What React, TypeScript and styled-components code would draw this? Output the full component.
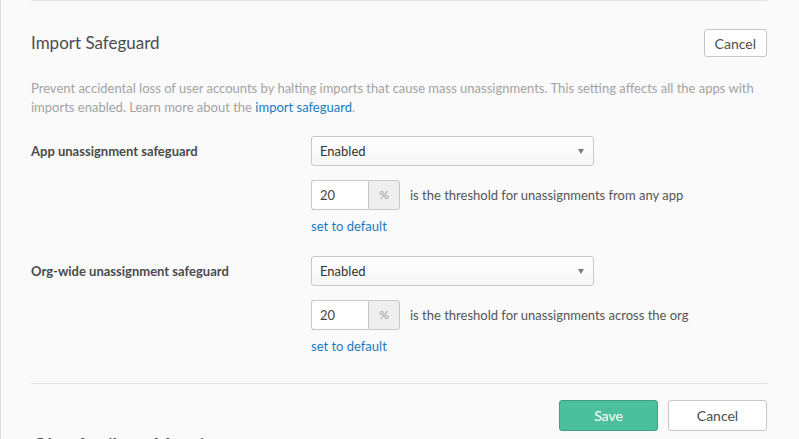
import React from 'react';
import styled, { createGlobalStyle } from 'styled-components';

const GlobalStyle = createGlobalStyle`
  html, body {
    margin: 0;
    padding: 0;
    background: #fafafa;
  }
  body {
    font-family: Lato, "Liberation Sans", Arial, sans-serif;
    color: #4a4a4a;
  }
`;

const Page = styled.div`
  border-left: 1px solid #dcdcdc;
  min-height: 439px;
  padding: 0 32px 0 30px;
  overflow: hidden;
`;

const Section = styled.section`
  border-top: 1px solid #e3e3e3;
  padding-top: 28px;
`;

const HeaderRow = styled.div`
  display: flex;
  align-items: center;
  justify-content: space-between;
  height: 28px;
`;

const Title = styled.h2`
  margin: 0;
  font-size: 17px;
  font-weight: 400;
  color: #4d4d4d;
  line-height: 28px;
`;

const Button = styled.button<{ $primary?: boolean; $wide?: boolean }>`
  box-sizing: border-box;
  font-family: inherit;
  font-size: 14px;
  height: ${p => (p.$wide ? '31px' : '28px')};
  width: ${p => (p.$wide ? '99px' : 'auto')};
  padding: 0 10px;
  border-radius: 3px;
  border: 1px solid ${p => (p.$primary ? '#3e9e80' : '#c6c6c6')};
  background: ${p => (p.$primary ? '#4cbf9c' : '#ffffff')};
  color: ${p => (p.$primary ? '#ffffff' : '#4d4d4d')};
  cursor: pointer;
`;

const Description = styled.p`
  margin: 22px 0 0;
  font-size: 13px;
  line-height: 19px;
  color: #a3a3a3;
`;

const Link = styled.a`
  color: #1a7cc0;
  text-decoration: none;
  cursor: pointer;
`;

const FormRow = styled.div<{ $first?: boolean }>`
  display: grid;
  grid-template-columns: 280px 1fr;
  margin-top: ${p => (p.$first ? '19px' : '20px')};
`;

const Label = styled.label`
  font-size: 13px;
  font-weight: 700;
  line-height: 30px;
  color: #4a4a4a;
`;

const Controls = styled.div`
  display: flex;
  flex-direction: column;
  align-items: flex-start;
`;

const Select = styled.div`
  position: relative;
  box-sizing: border-box;
  width: 283px;
  height: 30px;
  padding-left: 8px;
  border: 1px solid #c8c8c8;
  border-radius: 3px;
  background: linear-gradient(#ffffff, #f6f6f6);
  font-size: 13px;
  line-height: 28px;
  color: #333;
`;

const Caret = styled.span`
  position: absolute;
  right: 9px;
  top: 12px;
  width: 0;
  height: 0;
  border-left: 3.5px solid transparent;
  border-right: 3.5px solid transparent;
  border-top: 5px solid #7a7a7a;
`;

const ThresholdRow = styled.div`
  display: flex;
  align-items: center;
  margin-top: 14px;
`;

const NumberInput = styled.div`
  box-sizing: border-box;
  width: 57px;
  height: 30px;
  padding-left: 8px;
  border: 1px solid #c8c8c8;
  border-right: none;
  border-radius: 3px 0 0 3px;
  background: #fff;
  font-size: 13px;
  line-height: 28px;
  color: #444;
`;

const Addon = styled.div`
  box-sizing: border-box;
  width: 32px;
  height: 30px;
  border: 1px solid #c8c8c8;
  border-radius: 0 3px 3px 0;
  background: #efefef;
  text-align: center;
  font-size: 12px;
  line-height: 28px;
  color: #9a9a9a;
`;

const Hint = styled.span`
  margin-left: 10px;
  font-size: 13px;
  color: #555;
`;

const DefaultLink = styled(Link)`
  margin-top: 7px;
  font-size: 13px;
  line-height: 19px;
`;

const Divider = styled.hr`
  border: none;
  border-top: 1px solid #e1e1e1;
  margin: 27px 0 0;
`;

const Footer = styled.div`
  display: flex;
  justify-content: flex-end;
  gap: 10px;
  margin-top: 16px;
`;

const NextTitle = styled(Title)`
  margin-top: 4px;
  font-size: 18px;
  font-weight: 700;
  line-height: 20px;
  padding-left: 2px;
`;

type Safeguard = {
  label: string;
  hint: string;
};

const safeguards: Safeguard[] = [
  { label: 'App unassignment safeguard', hint: 'is the threshold for unassignments from any app' },
  { label: 'Org-wide unassignment safeguard', hint: 'is the threshold for unassignments across the org' },
];

export default function App() {
  return (
    <>
      <GlobalStyle />
      <Page>
        <Section>
          <HeaderRow>
            <Title>Import Safeguard</Title>
            <Button>Cancel</Button>
          </HeaderRow>
          <Description>
            Prevent accidental loss of user accounts by halting imports that cause mass unassignments. This setting
            affects all the apps with imports enabled. Learn more about the <Link>import safeguard</Link>.
          </Description>
          {safeguards.map((s, i) => (
            <FormRow key={s.label} $first={i === 0}>
              <Label>{s.label}</Label>
              <Controls>
                <Select>
                  Enabled
                  <Caret />
                </Select>
                <ThresholdRow>
                  <NumberInput>20</NumberInput>
                  <Addon>%</Addon>
                  <Hint>{s.hint}</Hint>
                </ThresholdRow>
                <DefaultLink>set to default</DefaultLink>
              </Controls>
            </FormRow>
          ))}
          <Divider />
          <Footer>
            <Button $primary $wide>Save</Button>
            <Button $wide>Cancel</Button>
          </Footer>
          <NextTitle>Okta Attribute Mappings</NextTitle>
        </Section>
      </Page>
    </>
  );
}
